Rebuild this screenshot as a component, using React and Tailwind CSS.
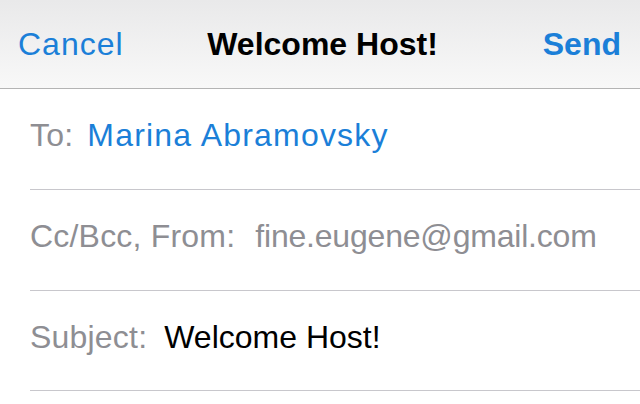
export default function App() {
  const rows = [
    { label: "To:", value: "Marina Abramovsky", tone: "text-[#1b7fd8] tracking-[1.2px]", gap: "ml-[14px]", h: "h-[101px]" },
    { label: "Cc/Bcc, From:", value: "fine.eugene@gmail.com", tone: "text-[#8e8e93] tracking-[-0.2px]", gap: "ml-[20px]", h: "h-[101px]" },
    { label: "Subject:", value: "Welcome Host!", tone: "text-black", gap: "ml-[17px]", h: "h-[100px]" },
  ];

  return (
    <div className="w-[640px] h-[404px] overflow-hidden bg-white" style={{ fontFamily: '"Liberation Sans", Arial, sans-serif' }}>
      <div className="grid grid-cols-[1fr_auto_1fr] items-center h-[89px] border-b border-[#b4b4b4] bg-gradient-to-b from-[#e9e9ea] to-[#f8f8f8] px-[18px] text-[32px] leading-none">
        <span className="text-[#1b7fd8] justify-self-start tracking-[1px]">Cancel</span>
        <span className="font-bold text-black ml-[5px]">Welcome Host!</span>
        <span className="font-bold text-[#1b7fd8] justify-self-end pr-px">Send</span>
      </div>

      <div className="ml-[30px]">
        {rows.map((r) => (
          <div key={r.label} className={`flex items-center ${r.h} border-b border-[#c8c7cc] pb-2 text-[32px] leading-none`}>
            <span className="text-[#8e8e93] tracking-[0.2px]">{r.label}</span>
            <span className={`${r.gap} ${r.tone}`}>{r.value}</span>
          </div>
        ))}
      </div>
    </div>
  );
}
